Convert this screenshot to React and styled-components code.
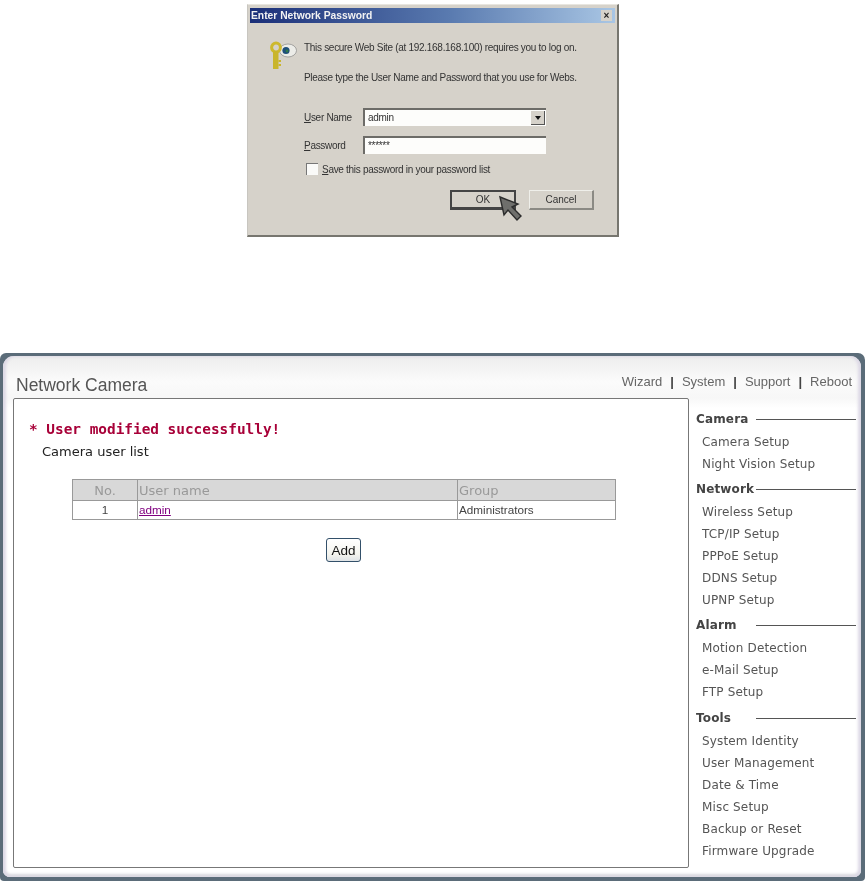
import React from 'react'
import styled, { createGlobalStyle } from 'styled-components'

const GlobalStyle = createGlobalStyle`
  html, body {
    margin: 0;
    padding: 0;
    background: #fff;
  }
  * {
    box-sizing: border-box;
  }
`

const Page = styled.div`
  width: 865px;
  height: 881px;
  overflow: hidden;
  padding-top: 4px;
  font-family: "Liberation Sans", Arial, sans-serif;
`

/* password dialog, a scanned picture in the original so slightly soft */
const Dialog = styled.div`
  position: relative;
  width: 372px;
  height: 233px;
  margin-left: 247px;
  padding: 3px 2px 0;
  background: #d6d2ca;
  border-right: 2px solid #77766f;
  border-bottom: 2px solid #77766f;
  border-left: 1px solid #c8c6c0;
  border-top: 1px solid #e8e6e0;
  filter: blur(0.55px);
  color: #333;
  font-size: 10px;
  letter-spacing: -0.3px;
`

const TitleBar = styled.div`
  display: flex;
  align-items: center;
  justify-content: space-between;
  height: 15px;
  padding: 0 3px 0 1px;
  background: linear-gradient(90deg, #1b2f78 0%, #5a7bb0 55%, #a9c6e4 100%);
  color: #f2f2f2;
  font-size: 10.3px;
  font-weight: 700;
  letter-spacing: 0;
`

const CloseButton = styled.span`
  display: flex;
  align-items: center;
  justify-content: center;
  width: 11px;
  height: 11px;
  background: #d6d2ca;
  color: #222;
  font-size: 10px;
  line-height: 11px;
  font-weight: 700;
`

const DialogBody = styled.div`
  display: grid;
  grid-template-columns: 36px 1fr;
  padding: 14px 0 0 18px;
`

const KeyIcon = styled.svg`
  width: 30px;
  height: 30px;
  margin-top: 3px;
`

const DialogForm = styled.div`
  padding-top: 4px;
`

const DialogLine = styled.div`
  height: 14px;
  line-height: 14px;
  margin-bottom: 16px;
  white-space: nowrap;
`

const FieldRow = styled.div`
  display: flex;
  align-items: center;
  height: 18px;
  margin-top: ${props => props.$top}px;
`

const FieldLabel = styled.label`
  width: 59px;
`

const FieldBox = styled.div`
  display: flex;
  align-items: center;
  justify-content: space-between;
  width: 183px;
  height: 18px;
  padding: 0 1px 0 3px;
  background: #fdfdfb;
  border-top: 2px solid #6d6c68;
  border-left: 2px solid #6d6c68;
  line-height: 14px;
  color: #333;
`

const DropArrow = styled.span`
  display: flex;
  align-items: center;
  justify-content: center;
  width: 14px;
  height: 14px;
  background: #d6d2ca;
  border-right: 1px solid #555;
  border-bottom: 1px solid #555;
  &::after {
    content: "";
    border-left: 3px solid transparent;
    border-right: 3px solid transparent;
    border-top: 4px solid #111;
  }
`

const CheckRow = styled.div`
  display: flex;
  align-items: center;
  gap: 4px;
  height: 12px;
  margin: 9px 0 0 2px;
  white-space: nowrap;
`

const CheckBox = styled.span`
  width: 12px;
  height: 12px;
  background: #fafaf8;
  border-top: 1px solid #777;
  border-left: 1px solid #777;
`

const DialogButtons = styled.div`
  display: flex;
  gap: 13px;
  margin: 15px 0 0 146px;
`

const DialogButton = styled.button`
  width: ${props => props.$wide}px;
  height: 20px;
  padding: 0;
  background: #d6d2ca;
  border: 1px solid #8b8a84;
  border-top-color: #efefea;
  border-left-color: #efefea;
  border-right-width: 2px;
  border-bottom-width: 2px;
  color: #333;
  font-family: inherit;
  font-size: 10px;
  ${props => props.$focused && `
    border: 2px solid #444;
    border-bottom-width: 3px;
  `}
`

const Cursor = styled.svg`
  position: absolute;
  left: 250px;
  top: 190px;
  width: 26px;
  height: 28px;
`

/* camera web admin */
const CameraFrame = styled.div`
  width: 865px;
  height: 528px;
  margin-top: 116px;
  padding: 3px 4px 4px 3px;
  background: #5b6c79;
  border-radius: 6px 7px 4px 4px;
  filter: blur(0.3px);
`

const CameraInner = styled.div`
  height: 100%;
  padding: 0 4px 0 10px;
  background: linear-gradient(180deg, #ededed 0%, #fbfbfb 5%, #f7f7f7 8%, #ffffff 10%);
  border-radius: 11px 11px 7px 7px;
  box-shadow: inset 3px 0 3px #ddd9e6, inset -3px 0 3px #ddd9e6, inset 0 -3px 3px #d9d9df;
`

const Header = styled.header`
  display: flex;
  justify-content: space-between;
  height: 42px;
  padding-right: 5px;
`

const Brand = styled.h1`
  margin: 19px 0 0 3px;
  color: #555;
  font-size: 17.5px;
  line-height: 20px;
  font-weight: 400;
`

const TopNav = styled.nav`
  display: flex;
  gap: 8px;
  margin-top: 18px;
  color: #666;
  font-size: 13px;
  line-height: 16px;
`

const NavSep = styled.span`
  color: #444;
  font-weight: 700;
`

const Columns = styled.div`
  display: flex;
  gap: 7px;
`

const ContentBox = styled.main`
  width: 676px;
  height: 470px;
  padding: 21px 0 0 15px;
  background: #fff;
  border: 1px solid #777;
  border-radius: 2px;
`

const Message = styled.div`
  color: #a80038;
  font-family: "DejaVu Sans Mono", monospace;
  font-size: 14.4px;
  font-weight: 700;
  line-height: 18px;
  white-space: pre;
`

const ListTitle = styled.div`
  margin: 5px 0 0 13px;
  color: #222;
  font-family: "DejaVu Sans", sans-serif;
  font-size: 13px;
  line-height: 18px;
`

const TableWrap = styled.div`
  width: 543px;
  margin: 18px 0 0 43px;
`

const UserTable = styled.table`
  width: 543px;
  border-collapse: collapse;
  table-layout: fixed;
`

const HeadCell = styled.th`
  width: ${props => props.$wide}px;
  height: 21px;
  padding: 0 1px;
  background: #d8d8d8;
  border: 1px solid #999;
  color: #999;
  font-family: "DejaVu Sans", sans-serif;
  font-size: 13px;
  font-weight: 400;
  text-align: ${props => (props.$center ? 'center' : 'left')};
`

const BodyCell = styled.td`
  height: 19px;
  padding: 0 1px 1px;
  border: 1px solid #999;
  color: #444;
  font-size: 11.7px;
  text-align: ${props => (props.$center ? 'center' : 'left')};
`

const UserLink = styled.a`
  color: #800080;
  text-decoration: underline;
`

const AddRow = styled.div`
  display: flex;
  justify-content: center;
  margin-top: 18px;
`

const AddButton = styled.button`
  width: 35px;
  height: 24px;
  padding: 0;
  background: linear-gradient(180deg, #ffffff 0%, #f4f4ee 70%, #dfe3e6 100%);
  border: 1px solid #33506a;
  border-radius: 3px;
  color: #111;
  font-family: "Liberation Sans", Arial, sans-serif;
  font-size: 13.5px;
`

const Sidebar = styled.aside`
  width: 160px;
  padding-top: 14px;
  font-family: "DejaVu Sans", sans-serif;
  font-size: 12px;
  letter-spacing: 0.15px;
`

const Section = styled.section`
  margin-top: ${props => props.$top}px;
`

const SectionHead = styled.div`
  display: flex;
  align-items: center;
  height: 14px;
  margin-bottom: 6px;
  color: #444;
  font-weight: 700;
  &::after {
    content: "";
    flex: 1;
    height: 1px;
    background: #555;
  }
`

const SectionLabel = styled.span`
  min-width: 60px;
`

const SectionItem = styled.a`
  display: block;
  height: 21.9px;
  padding-left: 6px;
  color: #555;
  line-height: 21.9px;
`

const menu = [
  { title: 'Camera', top: 0, items: ['Camera Setup', 'Night Vision Setup'] },
  { title: 'Network', top: 6.5, items: ['Wireless Setup', 'TCP/IP Setup', 'PPPoE Setup', 'DDNS Setup', 'UPNP Setup'] },
  { title: 'Alarm', top: 6.5, items: ['Motion Detection', 'e-Mail Setup', 'FTP Setup'] },
  { title: 'Tools', top: 7.2, items: ['System Identity', 'User Management', 'Date & Time', 'Misc Setup', 'Backup or Reset', 'Firmware Upgrade'] },
]

const App = () => (
  <Page>
    <GlobalStyle />
    <Dialog>
      <TitleBar>
        <span>Enter Network Password</span>
        <CloseButton>×</CloseButton>
      </TitleBar>
      <DialogBody>
        <KeyIcon viewBox="0 0 30 30">
          <ellipse cx="20" cy="10.5" rx="8.5" ry="6.5" fill="#ecece8" stroke="#8a8a88" strokeWidth="0.7" />
          <circle cx="18" cy="10.5" r="3.6" fill="#1f4f7a" />
          <circle cx="19" cy="11" r="1.4" fill="#2f7a4a" />
          <circle cx="8" cy="7.5" r="4.4" fill="none" stroke="#cdb92e" strokeWidth="3" />
          <rect x="5" y="11" width="5.5" height="18" fill="#c9b52c" />
          <rect x="10.5" y="20" width="2.5" height="2" fill="#c9b52c" />
          <rect x="10.5" y="24" width="2.5" height="2" fill="#c9b52c" />
        </KeyIcon>
        <DialogForm>
          <DialogLine>This secure Web Site (at 192.168.168.100) requires you to log on.</DialogLine>
          <DialogLine>Please type the User Name and Password that you use for Webs.</DialogLine>
          <FieldRow $top={23}>
            <FieldLabel><u>U</u>ser Name</FieldLabel>
            <FieldBox>admin<DropArrow /></FieldBox>
          </FieldRow>
          <FieldRow $top={10}>
            <FieldLabel><u>P</u>assword</FieldLabel>
            <FieldBox>******</FieldBox>
          </FieldRow>
          <CheckRow>
            <CheckBox />
            <span><u>S</u>ave this password in your password list</span>
          </CheckRow>
          <DialogButtons>
            <DialogButton $wide={66} $focused>OK</DialogButton>
            <DialogButton $wide={65}>Cancel</DialogButton>
          </DialogButtons>
        </DialogForm>
      </DialogBody>
      <Cursor viewBox="0 0 26 28">
        <path d="M2 2 L6 20 L10 15 L19 25 L23 21 L14 12 L20 9 Z" fill="#6f6f6c" stroke="#2c2c2c" strokeWidth="1.4" />
      </Cursor>
    </Dialog>

    <CameraFrame>
      <CameraInner>
        <Header>
          <Brand>Network Camera</Brand>
          <TopNav>
            <span>Wizard</span>
            <NavSep>|</NavSep>
            <span>System</span>
            <NavSep>|</NavSep>
            <span>Support</span>
            <NavSep>|</NavSep>
            <span>Reboot</span>
          </TopNav>
        </Header>
        <Columns>
          <ContentBox>
            <Message>* User modified successfully!</Message>
            <ListTitle>Camera user list</ListTitle>
            <TableWrap>
              <UserTable>
                <thead>
                  <tr>
                    <HeadCell $wide={65} $center>No.</HeadCell>
                    <HeadCell $wide={320}>User name</HeadCell>
                    <HeadCell $wide={158}>Group</HeadCell>
                  </tr>
                </thead>
                <tbody>
                  <tr>
                    <BodyCell $center>1</BodyCell>
                    <BodyCell><UserLink href="#">admin</UserLink></BodyCell>
                    <BodyCell>Administrators</BodyCell>
                  </tr>
                </tbody>
              </UserTable>
              <AddRow>
                <AddButton>Add</AddButton>
              </AddRow>
            </TableWrap>
          </ContentBox>
          <Sidebar>
            {menu.map(section => (
              <Section key={section.title} $top={section.top}>
                <SectionHead>
                  <SectionLabel>{section.title}</SectionLabel>
                </SectionHead>
                {section.items.map(item => (
                  <SectionItem key={item}>{item}</SectionItem>
                ))}
              </Section>
            ))}
          </Sidebar>
        </Columns>
      </CameraInner>
    </CameraFrame>
  </Page>
)

export default App
